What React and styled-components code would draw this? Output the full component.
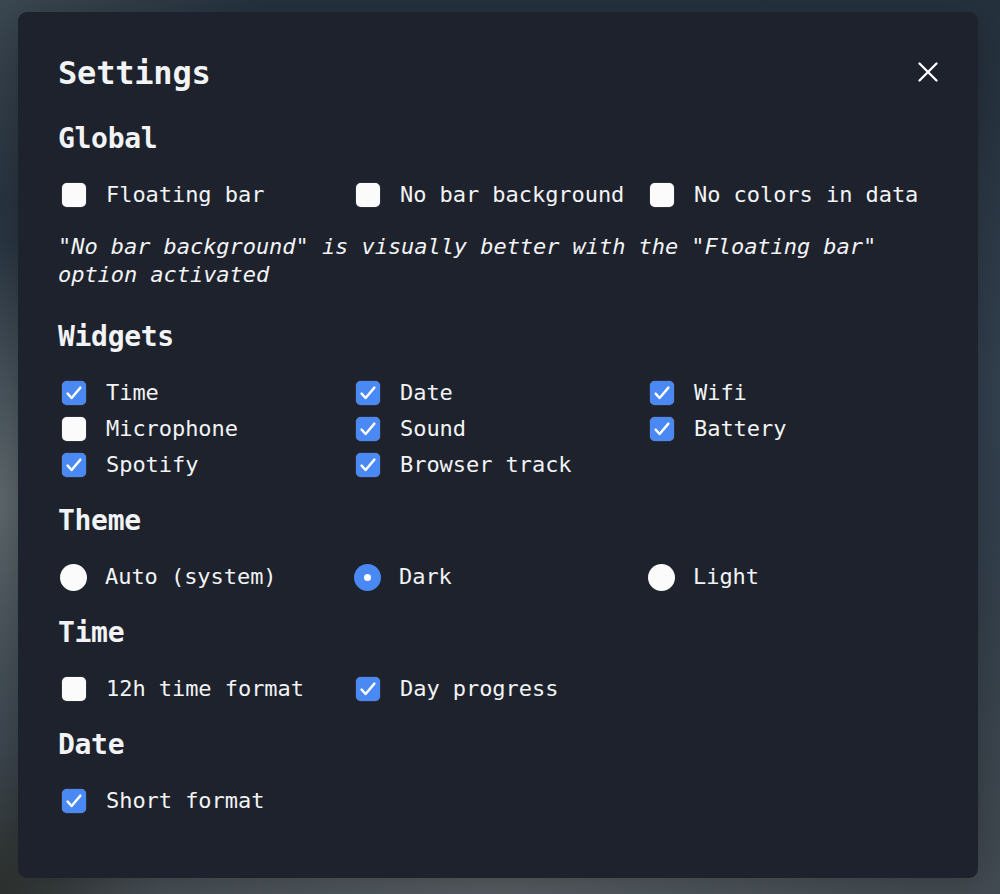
import React from "react";
import styled, { createGlobalStyle } from "styled-components";

const GlobalStyle = createGlobalStyle`
  html, body {
    margin: 0;
    padding: 0;
    height: 100%;
    overflow: hidden;
  }
  body {
    font-family: "DejaVu Sans Mono", "Liberation Mono", monospace;
    color: #f2f3f5;
    background:
      radial-gradient(ellipse 180px 260px at 0% 56%, rgba(98,108,112,0.95) 0%, rgba(98,108,112,0) 100%),
      radial-gradient(ellipse 520px 160px at 50% 100%, rgba(92,99,104,0.95) 0%, rgba(92,99,104,0) 100%),
      radial-gradient(ellipse 160px 140px at 0% 100%, rgba(40,44,40,0.9) 0%, rgba(40,44,40,0) 100%),
      radial-gradient(ellipse 200px 300px at 100% 45%, rgba(52,66,80,0.9) 0%, rgba(52,66,80,0) 100%),
      radial-gradient(ellipse 260px 200px at 0% 0%, rgba(62,74,84,0.9) 0%, rgba(62,74,84,0) 100%),
      linear-gradient(180deg, #25313d 0%, #2c3946 45%, #434b52 100%);
  }
`;

const Page = styled.div`
  box-sizing: border-box;
  height: 100vh;
  padding: 12px 22px 0 18px;
`;

const Dialog = styled.section`
  box-sizing: border-box;
  width: 960px;
  padding: 41px 40px 59px;
  background: #1d222c;
  border-radius: 9px;
  box-shadow: 0 10px 40px rgba(0, 0, 0, 0.25);
`;

const Header = styled.header`
  display: flex;
  align-items: center;
  justify-content: space-between;
  height: 40px;
  margin-bottom: 26px;
`;

const Title = styled.h1`
  margin: 0;
  font-size: 32px;
  line-height: 40px;
  font-weight: 700;
  letter-spacing: -0.2px;
`;

const CloseButton = styled.button`
  width: 20px;
  height: 20px;
  margin-top: -2px;
  padding: 0;
  border: 0;
  background: none;
  color: #ffffff;
  cursor: pointer;
  display: flex;
  svg {
    display: block;
  }
`;

const Sections = styled.div`
  display: flex;
  flex-direction: column;
  gap: 18px;
`;

const Section = styled.div`
  display: flex;
  flex-direction: column;
`;

const SectionTitle = styled.h2`
  margin: 0 0 18px;
  font-size: 28px;
  line-height: 40px;
  font-weight: 700;
  letter-spacing: -0.3px;
`;

const OptionGrid = styled.div`
  display: grid;
  grid-template-columns: repeat(3, 294px);
  grid-auto-rows: 36px;
`;

const Option = styled.label`
  display: flex;
  align-items: center;
  font-size: 22px;
  line-height: 36px;
  letter-spacing: -0.05px;
  white-space: nowrap;
  cursor: pointer;
`;

const Box = styled.span`
  box-sizing: border-box;
  flex: none;
  width: 24px;
  height: 24px;
  margin: 0 20px 0 4px;
  border-radius: 5px;
  background: ${(p) => (p.$checked ? "#4a89f3" : "#fbfbfc")};
  display: flex;
  align-items: center;
  justify-content: center;
  box-shadow: 0 0 1px rgba(255, 255, 255, 0.6);
`;

const RadioDot = styled.span`
  box-sizing: border-box;
  flex: none;
  width: 27px;
  height: 27px;
  margin: 0 18px 0 2px;
  border-radius: 50%;
  background: ${(p) => (p.$checked ? "#4a89f3" : "#fbfbfc")};
  display: flex;
  align-items: center;
  justify-content: center;
  &::after {
    content: "";
    display: ${(p) => (p.$checked ? "block" : "none")};
    width: 7px;
    height: 7px;
    border-radius: 50%;
    background: #ffffff;
  }
`;

const Note = styled.p`
  margin: 20px 0 10px;
  font-size: 22px;
  line-height: 28px;
  letter-spacing: -0.05px;
  font-style: italic;
  max-width: 880px;
`;

const Check = () => (
  <svg width="24" height="24" viewBox="0 0 24 24" fill="none">
    <path
      d="M5.6 12.6 L9.6 17 L18.4 6.6"
      stroke="#ffffff"
      strokeWidth="2.4"
      strokeLinecap="round"
      strokeLinejoin="round"
    />
  </svg>
);

const CheckOption = ({ label, checked }) => (
  <Option>
    <Box $checked={checked}>{checked && <Check />}</Box>
    {label}
  </Option>
);

const RadioOption = ({ label, checked }) => (
  <Option>
    <RadioDot $checked={checked} />
    {label}
  </Option>
);

const sections = [
  {
    title: "Widgets",
    items: [
      ["Time", true],
      ["Date", true],
      ["Wifi", true],
      ["Microphone", false],
      ["Sound", true],
      ["Battery", true],
      ["Spotify", true],
      ["Browser track", true],
    ],
  },
];

export default function App() {
  return (
    <>
      <GlobalStyle />
      <Page>
        <Dialog>
          <Header>
            <Title>Settings</Title>
            <CloseButton aria-label="Close">
              <svg width="20" height="20" viewBox="0 0 20 20" fill="none">
                <path
                  d="M1.5 1.5 L18.5 18.5 M18.5 1.5 L1.5 18.5"
                  stroke="#ffffff"
                  strokeWidth="2.3"
                  strokeLinecap="round"
                />
              </svg>
            </CloseButton>
          </Header>
          <Sections>
            <Section>
              <SectionTitle>Global</SectionTitle>
              <OptionGrid>
                <CheckOption label="Floating bar" checked={false} />
                <CheckOption label="No bar background" checked={false} />
                <CheckOption label="No colors in data" checked={false} />
              </OptionGrid>
              <Note>
                "No bar background" is visually better with the "Floating bar"
                option activated
              </Note>
            </Section>
            {sections.map((s) => (
              <Section key={s.title}>
                <SectionTitle>{s.title}</SectionTitle>
                <OptionGrid>
                  {s.items.map(([label, checked]) => (
                    <CheckOption key={label} label={label} checked={checked} />
                  ))}
                </OptionGrid>
              </Section>
            ))}
            <Section>
              <SectionTitle>Theme</SectionTitle>
              <OptionGrid>
                <RadioOption label="Auto (system)" checked={false} />
                <RadioOption label="Dark" checked={true} />
                <RadioOption label="Light" checked={false} />
              </OptionGrid>
            </Section>
            <Section>
              <SectionTitle>Time</SectionTitle>
              <OptionGrid>
                <CheckOption label="12h time format" checked={false} />
                <CheckOption label="Day progress" checked={true} />
              </OptionGrid>
            </Section>
            <Section>
              <SectionTitle>Date</SectionTitle>
              <OptionGrid>
                <CheckOption label="Short format" checked={true} />
              </OptionGrid>
            </Section>
          </Sections>
        </Dialog>
      </Page>
    </>
  );
}
